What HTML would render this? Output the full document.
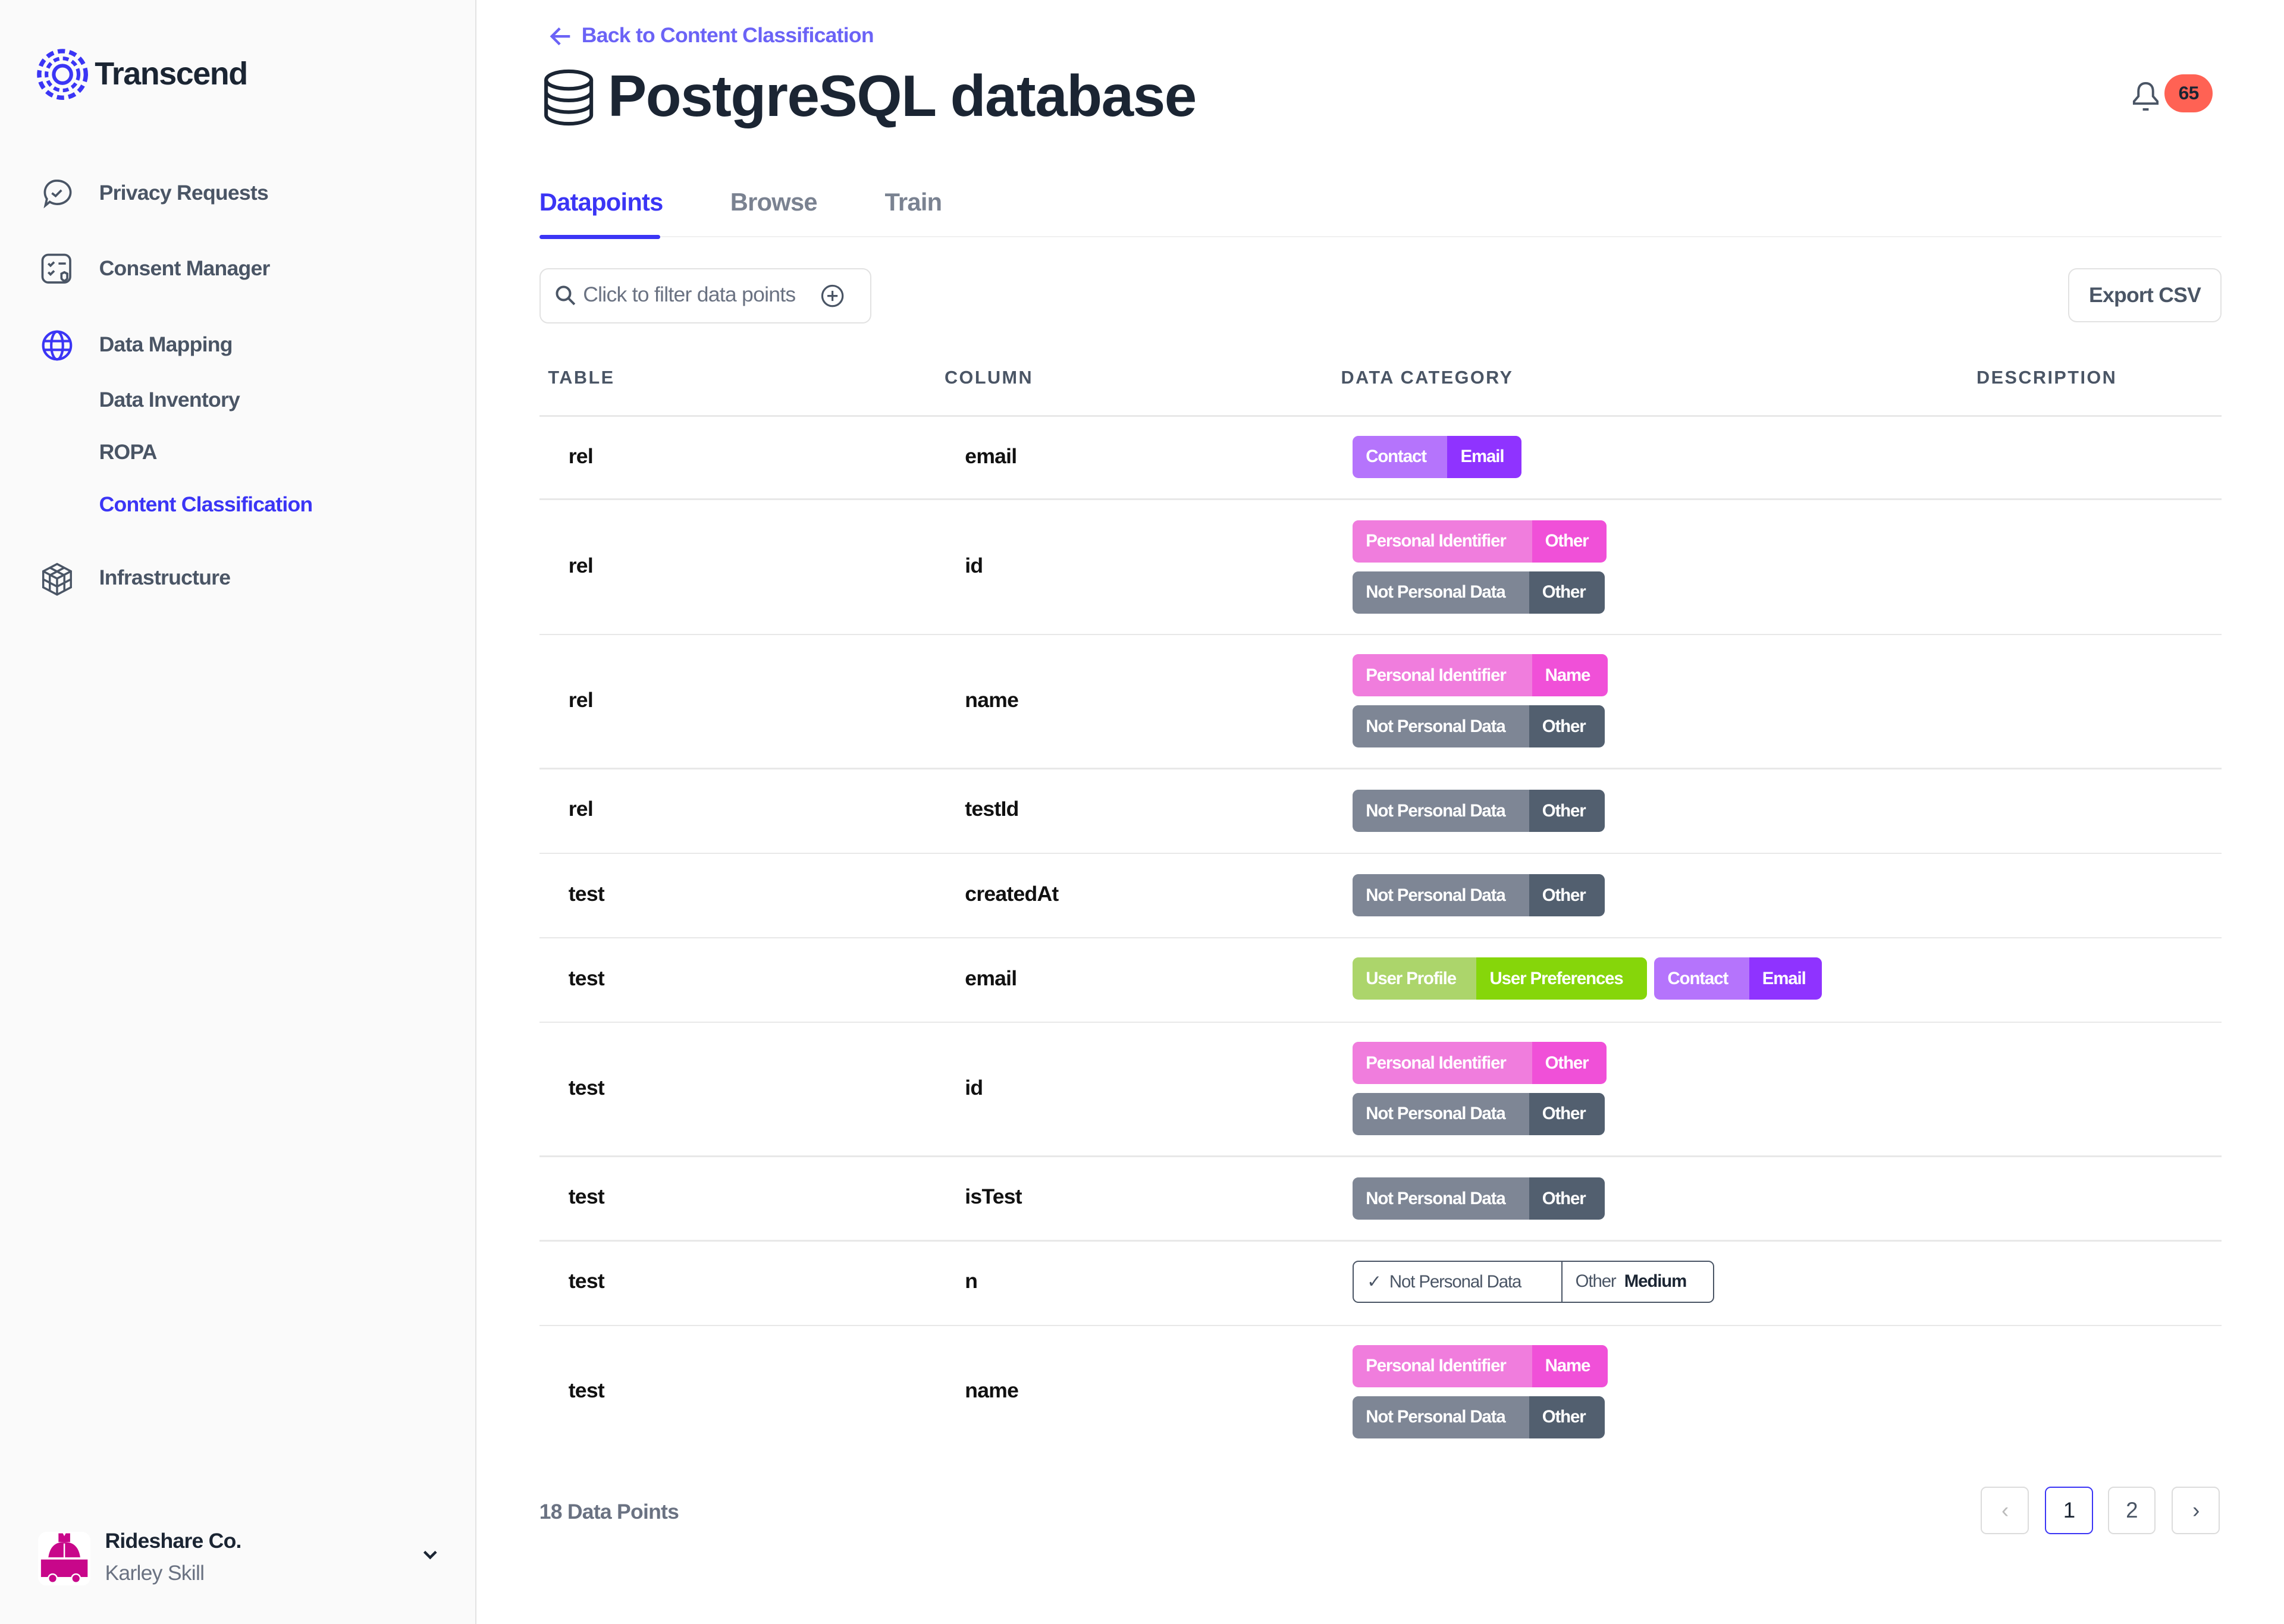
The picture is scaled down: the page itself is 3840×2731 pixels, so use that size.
<!DOCTYPE html>
<html><head><meta charset="utf-8">
<style>
html,body{margin:0;padding:0;width:3840px;height:2731px;overflow:hidden;background:#fff}
#z{zoom:2.4506;width:1567px;height:1115px;position:relative;font-family:"Liberation Sans",sans-serif;letter-spacing:-0.3px}
.a{position:absolute;white-space:nowrap}
.sb{position:absolute;left:0;top:0;width:326px;height:1115px;background:#fafafa;border-right:1px solid #e3e3e3}
.nav{font-size:14.5px;font-weight:700;color:#4a5565}
.th{font-size:12.5px;font-weight:700;color:#4a5565;letter-spacing:1px}
.cell{font-size:14.5px;font-weight:700;color:#111}
.line{position:absolute;left:370px;width:1154px;height:1px;background:#e8e8e8}
.pill{position:absolute;display:flex;height:29px;border-radius:4px;overflow:hidden;font-size:12px;font-weight:700;color:#fff;letter-spacing:-0.45px;white-space:nowrap}
.pill span{display:flex;align-items:center;padding:0 0 0 9px;box-sizing:border-box;white-space:nowrap}
.pg{position:absolute;top:1020px;width:33px;height:33px;border:1px solid #dcdcdc;border-radius:4px;box-sizing:border-box;display:flex;align-items:center;justify-content:center;font-size:15px;color:#4a5565}
</style></head><body><div id="z">
<div class="sb"></div>
<svg class="a" style="left:25px;top:33px" width="36" height="36" viewBox="0 0 36 36" fill="none" stroke="#3b35f5"><circle cx="18" cy="18" r="16" stroke-width="3" stroke-dasharray="5 3"/><circle cx="18" cy="18" r="11" stroke-width="2.5" stroke-dasharray="4 2.5"/><circle cx="18" cy="18" r="6" stroke-width="2.5"/></svg>
<div class="a" style="left:65px;top:38px;font-size:22px;font-weight:700;color:#1b2533;letter-spacing:-0.6px">Transcend</div>
<svg class="a" style="left:28px;top:122px" width="22" height="22" viewBox="0 0 22 22" fill="none" stroke="#4a5565" stroke-width="1.5"><path d="M11 2a9 8 0 1 1-5 14.5L3 19l1-4.5A8 8 0 0 1 11 2z"/><path d="M7.5 10.5l2.5 2 4-4"/></svg>
<div class="a nav" style="left:68px;top:124px">Privacy Requests</div>
<svg class="a" style="left:28px;top:174px" width="22" height="22" viewBox="0 0 22 22" fill="none" stroke="#4a5565" stroke-width="1.5"><rect x="1" y="1" width="19" height="19" rx="4"/><path d="M5 7l1.5 1.5L9 6M5 13l1.5 1.5L9 12M12 7h5M14 14v3c0 1 2 2 2 2s2-1 2-2v-3l-2-1z"/></svg>
<div class="a nav" style="left:68px;top:176px">Consent Manager</div>
<svg class="a" style="left:28px;top:226px" width="22" height="22" viewBox="0 0 22 22" fill="none" stroke="#3b35f5" stroke-width="1.7"><circle cx="11" cy="11" r="9.5"/><ellipse cx="11" cy="11" rx="4" ry="9.5"/><path d="M2 8h18M2 14h18"/></svg>
<div class="a nav" style="left:68px;top:228px">Data Mapping</div>
<div class="a nav" style="left:68px;top:266px">Data Inventory</div>
<div class="a nav" style="left:68px;top:302px">ROPA</div>
<div class="a nav" style="left:68px;top:338px;color:#3b35f5">Content Classification</div>
<svg class="a" style="left:28px;top:386px" width="22" height="23" viewBox="0 0 22 23" fill="none" stroke="#4a5565" stroke-width="1.4"><path d="M11 1l9.5 5v11L11 22 1.5 17V6z"/><path d="M1.5 6L11 11l9.5-5M11 11v11M6 3.5l9.5 5M16 3.5L6.5 8.5M1.5 11.5l9.5 5 9.5-5M6 8.5v11M16 8.5v11"/></svg>
<div class="a nav" style="left:68px;top:388px">Infrastructure</div>
<svg class="a" style="left:26px;top:1051px" width="36" height="37" viewBox="0 0 36 37"><rect width="36" height="37" rx="6" fill="#fff"/><path d="M14 1h3l1 2 1-2h3v6h-8z" fill="#c8078a"/><path d="M7 18C8 10 12 7 18 7s10 3 11 11z" fill="#c8078a"/><rect x="2" y="19" width="32" height="12" fill="#c8078a"/><circle cx="10" cy="32" r="3" fill="#c8078a" stroke="#fff"/><circle cx="26" cy="32" r="3" fill="#c8078a" stroke="#fff"/><path d="M18 8v10M7 18h22" stroke="#fff" stroke-width="1"/></svg>
<div class="a" style="left:72px;top:1049px;font-size:14.5px;font-weight:700;color:#1b2533">Rideshare Co.</div>
<div class="a" style="left:72px;top:1071px;font-size:14.5px;color:#6a7282">Karley Skill</div>
<svg class="a" style="left:290px;top:1064px" width="10" height="7" viewBox="0 0 10 7" fill="none" stroke="#1b2533" stroke-width="1.8"><path d="M1 1l4 4 4-4"/></svg>

<svg class="a" style="left:377px;top:18px" width="15" height="14" viewBox="0 0 15 14" fill="none" stroke="#6b63f6" stroke-width="1.8"><path d="M14 7H2M7 1.5L1.5 7 7 12.5"/></svg>
<div class="a" style="left:399px;top:16px;font-size:14.5px;font-weight:700;color:#6b63f6">Back to Content Classification</div>
<svg class="a" style="left:372px;top:47px" width="36" height="40" viewBox="0 0 36 40" fill="none" stroke="#1b2533" stroke-width="2.5"><ellipse cx="18" cy="8" rx="15.5" ry="6"/><path d="M2.5 8v24c0 3.3 7 6 15.5 6s15.5-2.7 15.5-6V8M2.5 16c0 3.3 7 6 15.5 6s15.5-2.7 15.5-6M2.5 24c0 3.3 7 6 15.5 6s15.5-2.7 15.5-6"/></svg>
<div class="a" style="left:417px;top:43px;font-size:40px;font-weight:700;color:#1b2533;letter-spacing:-0.6px">PostgreSQL database</div>
<svg class="a" style="left:1462px;top:55px" width="20" height="22" viewBox="0 0 20 22" fill="none" stroke="#4a5565" stroke-width="1.6"><path d="M10 2c-3.5 0-5 2.5-5 5.5v3.5l-3 3.5v1.5h16v-1.5l-3-3.5V7.5C15 4.5 13.5 2 10 2zM8 20h4"/></svg>
<div class="a" style="left:1485px;top:51px;width:33px;height:26px;border-radius:13px;background:#ff6254;color:#1b2533;font-size:13px;font-weight:700;display:flex;align-items:center;justify-content:center">65</div>

<div class="a" style="left:370px;top:129px;font-size:17px;font-weight:700;color:#3b35f5">Datapoints</div>
<div class="a" style="left:501px;top:129px;font-size:17px;font-weight:700;color:#7a8291">Browse</div>
<div class="a" style="left:607px;top:129px;font-size:17px;font-weight:700;color:#7a8291">Train</div>
<div class="line" style="top:162px;background:#f0f0f0"></div>
<div class="a" style="left:370px;top:161px;width:83px;height:3px;background:#3b35f5;border-radius:2px"></div>

<div class="a" style="left:370px;top:184px;width:228px;height:38px;border:1px solid #e2e2e2;border-radius:6px;box-sizing:border-box"></div>
<svg class="a" style="left:381px;top:196px" width="14" height="14" viewBox="0 0 14 14" fill="none" stroke="#4a5565" stroke-width="1.6"><circle cx="5.5" cy="5.5" r="4.5"/><path d="M9 9l4 4"/></svg>
<div class="a" style="left:400px;top:194px;font-size:14.5px;color:#6a7282">Click to filter data points</div>
<svg class="a" style="left:563px;top:195px" width="16" height="16" viewBox="0 0 16 16" fill="none" stroke="#4a5565" stroke-width="1.3"><circle cx="8" cy="8" r="7"/><path d="M8 4.5v7M4.5 8h7"/></svg>
<div class="a" style="left:1419px;top:184px;width:105px;height:37px;border:1px solid #e2e2e2;border-radius:6px;box-sizing:border-box;display:flex;align-items:center;justify-content:center;font-size:14.5px;font-weight:700;color:#4a5565">Export CSV</div>

<div class="a th" style="left:376px;top:252px">TABLE</div>
<div class="a th" style="left:648px;top:252px">COLUMN</div>
<div class="a th" style="left:920px;top:252px">DATA CATEGORY</div>
<div class="a th" style="left:1356px;top:252px">DESCRIPTION</div>

<div class="line" style="top:285px"></div>
<div class="line" style="top:342px"></div>
<div class="line" style="top:435px"></div>
<div class="line" style="top:527px"></div>
<div class="line" style="top:585px"></div>
<div class="line" style="top:643px"></div>
<div class="line" style="top:701px"></div>
<div class="line" style="top:793px"></div>
<div class="line" style="top:851px"></div>
<div class="line" style="top:909px"></div>

<div class="a cell" style="left:390px;top:305px">rel</div><div class="a cell" style="left:662px;top:305px">email</div>
<div class="a cell" style="left:390px;top:380px">rel</div><div class="a cell" style="left:662px;top:380px">id</div>
<div class="a cell" style="left:390px;top:472px">rel</div><div class="a cell" style="left:662px;top:472px">name</div>
<div class="a cell" style="left:390px;top:547px">rel</div><div class="a cell" style="left:662px;top:547px">testId</div>
<div class="a cell" style="left:390px;top:605px">test</div><div class="a cell" style="left:662px;top:605px">createdAt</div>
<div class="a cell" style="left:390px;top:663px">test</div><div class="a cell" style="left:662px;top:663px">email</div>
<div class="a cell" style="left:390px;top:738px">test</div><div class="a cell" style="left:662px;top:738px">id</div>
<div class="a cell" style="left:390px;top:813px">test</div><div class="a cell" style="left:662px;top:813px">isTest</div>
<div class="a cell" style="left:390px;top:871px">test</div><div class="a cell" style="left:662px;top:871px">n</div>
<div class="a cell" style="left:390px;top:946px">test</div><div class="a cell" style="left:662px;top:946px">name</div>

<div class="pill" style="left:928px;top:299px"><span style="background:#b574fc;width:65px">Contact</span><span style="background:#8f33ff;width:51px">Email</span></div>

<div class="pill" style="left:928px;top:357px"><span style="background:#f07ddd;width:123px">Personal Identifier</span><span style="background:#f050d8;width:51px">Other</span></div>
<div class="pill" style="left:928px;top:392px"><span style="background:#7e8695;width:121px">Not Personal Data</span><span style="background:#525f6f;width:52px">Other</span></div>

<div class="pill" style="left:928px;top:449px"><span style="background:#f07ddd;width:123px">Personal Identifier</span><span style="background:#f050d8;width:52px">Name</span></div>
<div class="pill" style="left:928px;top:484px"><span style="background:#7e8695;width:121px">Not Personal Data</span><span style="background:#525f6f;width:52px">Other</span></div>

<div class="pill" style="left:928px;top:542px"><span style="background:#7e8695;width:121px">Not Personal Data</span><span style="background:#525f6f;width:52px">Other</span></div>
<div class="pill" style="left:928px;top:600px"><span style="background:#7e8695;width:121px">Not Personal Data</span><span style="background:#525f6f;width:52px">Other</span></div>

<div class="pill" style="left:928px;top:657px"><span style="background:#acd56b;width:85px">User Profile</span><span style="background:#86d60a;width:117px">User Preferences</span></div>
<div class="pill" style="left:1135px;top:657px"><span style="background:#b574fc;width:65px">Contact</span><span style="background:#8f33ff;width:50px">Email</span></div>

<div class="pill" style="left:928px;top:715px"><span style="background:#f07ddd;width:123px">Personal Identifier</span><span style="background:#f050d8;width:51px">Other</span></div>
<div class="pill" style="left:928px;top:750px"><span style="background:#7e8695;width:121px">Not Personal Data</span><span style="background:#525f6f;width:52px">Other</span></div>

<div class="pill" style="left:928px;top:808px"><span style="background:#7e8695;width:121px">Not Personal Data</span><span style="background:#525f6f;width:52px">Other</span></div>

<div class="pill" style="left:928px;top:865px;border:1px solid #4a5565;box-sizing:border-box;color:#4a5565;font-weight:400;width:248px"><span style="width:143px;border-right:1px solid #4a5565">✓&nbsp;&nbsp;Not Personal Data</span><span>Other&nbsp;&nbsp;<b style="color:#1b2533">Medium</b></span></div>

<div class="pill" style="left:928px;top:923px"><span style="background:#f07ddd;width:123px">Personal Identifier</span><span style="background:#f050d8;width:52px">Name</span></div>
<div class="pill" style="left:928px;top:958px"><span style="background:#7e8695;width:121px">Not Personal Data</span><span style="background:#525f6f;width:52px">Other</span></div>

<div class="a" style="left:370px;top:1029px;font-size:14.5px;font-weight:700;color:#6a7282">18 Data Points</div>
<div class="pg" style="left:1359px;color:#bbb">‹</div>
<div class="pg" style="left:1403px;border-color:#3b35f5;color:#1b2533">1</div>
<div class="pg" style="left:1446px">2</div>
<div class="pg" style="left:1490px">›</div>
</div></body></html>
